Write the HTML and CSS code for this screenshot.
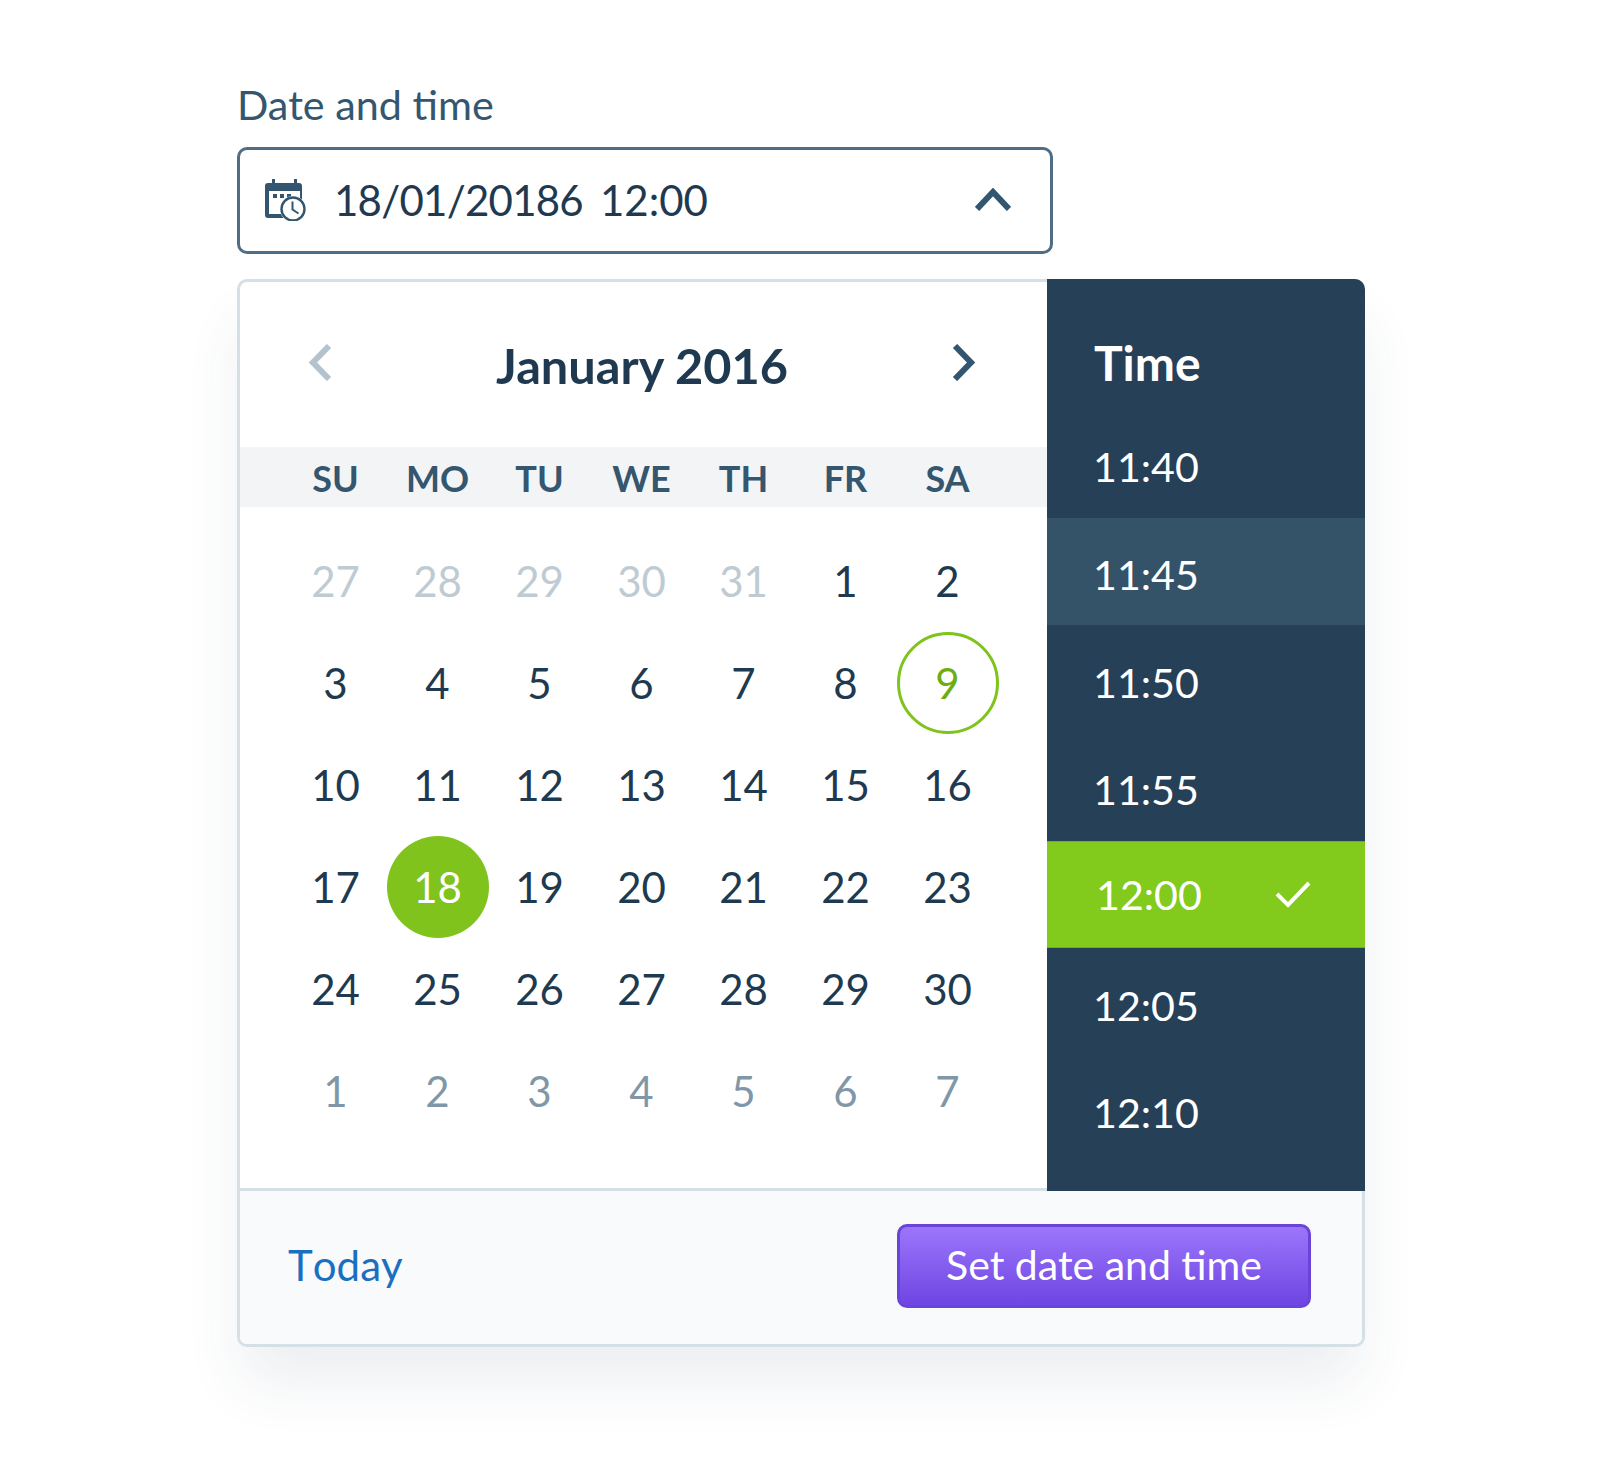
FILE: index.html
```html
<!DOCTYPE html>
<html lang="en">
<head>
  <meta charset="UTF-8" />
  <title>Date and time</title>
  <meta name="viewport" content="width=device-width, initial-scale=1" />
  <link rel="stylesheet" href="styles.css">
</head>
<body>
  <div class="wrap">
    <label class="field-label">Date and time</label>
    <div class="field">
      <svg class="field-icon" viewBox="0 0 42 42" aria-hidden="true">
        <path d="M7 0h3v4h19V0h3v4h2a3 3 0 0 1 3 3v32H3a3 3 0 0 1-3-3V7a3 3 0 0 1 3-3h4z" fill="#335670"></path>
        <rect x="4" y="12" width="31" height="23" fill="#fff"></rect>
        <rect x="8" y="15" width="4" height="4" fill="#335670"></rect>
        <rect x="15" y="15" width="4" height="4" fill="#335670"></rect>
        <rect x="22" y="15" width="4" height="4" fill="#335670"></rect>
        <circle cx="28" cy="30" r="13" fill="#fff"></circle>
        <circle cx="28" cy="30" r="11.500" fill="#fff" stroke="#335670" stroke-width="2.400"></circle>
        <path d="M27.500 22.500v8l6 4" fill="none" stroke="#335670" stroke-width="2"></path>
      </svg>
      <span class="field-value">
        <span class="field-date">18/01/20186</span>
        <span>12:00</span>
      </span>
      <svg class="field-arrow" viewBox="0 0 36 23" aria-hidden="true">
        <path d="M2 21L18 4l16 17" fill="none" stroke="#335670" stroke-width="6"></path>
      </svg>
    </div>

    <div class="picker">
      <div class="picker-body">
        <div class="calendar">
          <div class="cal-head">
            <svg class="cal-nav" viewBox="0 0 23 37" aria-hidden="true">
              <path d="M20 2L4 18.500l16 16.500" fill="none" stroke="#b4c2cd" stroke-width="6"></path>
            </svg>
            <div class="cal-title">January 2016</div>
            <svg class="cal-nav" viewBox="0 0 23 37" aria-hidden="true">
              <path d="M3 2l16 16.500L3 35" fill="none" stroke="#335670" stroke-width="6"></path>
            </svg>
          </div>
          <div class="week-days">
            <span>SU</span><span>MO</span><span>TU</span><span>WE</span><span>TH</span><span>FR</span><span>SA</span>
          </div>
          <div class="days">
            <span class="day faded">27</span><span class="day faded">28</span><span class="day faded">29</span><span class="day faded">30</span><span class="day faded">31</span><span class="day">1</span><span class="day">2</span>
            <span class="day">3</span><span class="day">4</span><span class="day">5</span><span class="day">6</span><span class="day">7</span><span class="day">8</span><span class="day today">9</span>
            <span class="day">10</span><span class="day">11</span><span class="day">12</span><span class="day">13</span><span class="day">14</span><span class="day">15</span><span class="day">16</span>
            <span class="day">17</span><span class="day selected">18</span><span class="day">19</span><span class="day">20</span><span class="day">21</span><span class="day">22</span><span class="day">23</span>
            <span class="day">24</span><span class="day">25</span><span class="day">26</span><span class="day">27</span><span class="day">28</span><span class="day">29</span><span class="day">30</span>
            <span class="day next">1</span><span class="day next">2</span><span class="day next">3</span><span class="day next">4</span><span class="day next">5</span><span class="day next">6</span><span class="day next">7</span>
          </div>
        </div>

        <div class="times">
          <div class="times-title">Time</div>
          <div class="time">11:40</div>
          <div class="time hover">11:45</div>
          <div class="time">11:50</div>
          <div class="time">11:55</div>
          <div class="time active">
            12:00
            <svg class="time-check" viewBox="0 0 36 28" aria-hidden="true">
              <path d="M2 14l11 11L34 3" fill="none" stroke="#fff" stroke-width="4"></path>
            </svg>
          </div>
          <div class="time">12:05</div>
          <div class="time">12:10</div>
        </div>
      </div>

      <div class="picker-foot">
        <a class="today-link">Today</a>
        <button class="set-btn">Set date and time</button>
      </div>
    </div>
  </div>
</body>
</html>
```

FILE: styles.css
```css
* { box-sizing: border-box; }
body {
  font-family: Lato, "Open Sans", sans-serif;
  margin: 0;
  padding: 0;
  min-height: 100vh;
  background: #fff;
  color: #1f3a50;
}

.wrap {
  width: 1128px;
  margin-left: 237px;
  padding-top: 78px;
  padding-bottom: 129px;
}

.field-label {
  display: block;
  font-size: 41.300px;
  line-height: 52px;
  color: #34566f;
  margin-bottom: 17px;
}

.field {
  width: 816px;
  height: 107px;
  border: 3px solid #4f6e85;
  border-radius: 10px;
  display: flex;
  align-items: center;
  padding: 0 39px 2px 25px;
  background: #fff;
}
.field-icon {
  width: 42px;
  height: 42px;
  flex: none;
}
.field-value {
  flex: 1;
  display: flex;
  gap: 17px;
  margin-left: 27px;
  font-size: 42px;
}
.field-date {
  letter-spacing: -0.750px;
}
.field-arrow {
  width: 36px;
  height: 23px;
  flex: none;
}

.picker {
  margin-top: 25px;
  border: 3px solid #d5e0e6;
  border-radius: 10px;
  background: #fff;
  box-shadow: 0 40px 60px -5px rgba(40, 70, 95, 0.09);
}
.picker-body {
  display: flex;
}
.calendar {
  flex: 1;
  padding-bottom: 46px;
}
.cal-head {
  height: 165px;
  display: flex;
  align-items: center;
  justify-content: space-between;
  padding: 0 72px 0 69px;
}
.cal-nav {
  width: 23px;
  height: 37px;
  margin-bottom: 4px;
}
.cal-title {
  font-size: 48.700px;
  font-weight: 700;
  color: #1f3a50;
  margin-top: 1px;
}
.week-days {
  height: 60px;
  background: #f2f4f6;
  padding: 2px 45px 0 44.500px;
  display: grid;
  grid-template-columns: repeat(7, 102px);
  align-items: center;
  text-align: center;
  font-size: 36px;
  font-weight: 700;
  color: #34566f;
}
.days {
  padding: 23px 45px 0 44.500px;
  display: grid;
  grid-template-columns: repeat(7, 102px);
  grid-auto-rows: 102px;
}
.day {
  display: flex;
  align-items: center;
  justify-content: center;
  border-radius: 50%;
  font-size: 42px;
}
.day.faded { color: #bfcbd3; }
.day.next { color: #7f97a8; }
.day.today {
  border: 3px solid #7fc31c;
  color: #6cae12;
}
.day.selected {
  background: #7fc31c;
  color: #fff;
}

.times {
  width: 318px;
  flex: none;
  margin: -3px -3px -3px 0;
  background: #264058;
  border-top-right-radius: 10px;
  color: #fff;
  position: relative;
}
.times-title {
  height: 131px;
  padding: 36px 0 0 47px;
  display: flex;
  align-items: center;
  font-size: 48px;
  font-weight: 700;
}
.time {
  height: 107.700px;
  padding: 5px 0 0 46px;
  display: flex;
  align-items: center;
  justify-content: space-between;
  font-size: 41.200px;
}
.time.hover { background: #345268; }
.time.active {
  background: #82ca1b;
  border-top: 1px solid #6fae22;
  border-bottom: 1px solid #6fae22;
  padding: 0 54px 2px 49px;
}
.time-check {
  width: 36px;
  height: 28px;
}

.picker-foot {
  height: 156px;
  border-top: 3px solid #d5e0e6;
  border-radius: 0 0 7px 7px;
  background: #f9fafc;
  display: flex;
  align-items: center;
  justify-content: space-between;
  padding: 0 51px 3px 48px;
}
.today-link {
  font-size: 42px;
  font-kerning: none;
  color: #1a6fc1;
  margin-bottom: 2px;
}
.set-btn {
  width: 414px;
  height: 84px;
  border: 3px solid #6a44d8;
  border-radius: 10px;
  background: linear-gradient(#9b76fb, #6f45e3);
  color: #fff;
  font-family: inherit;
  font-size: 41px;
  padding: 0 0 4px;
}
```
